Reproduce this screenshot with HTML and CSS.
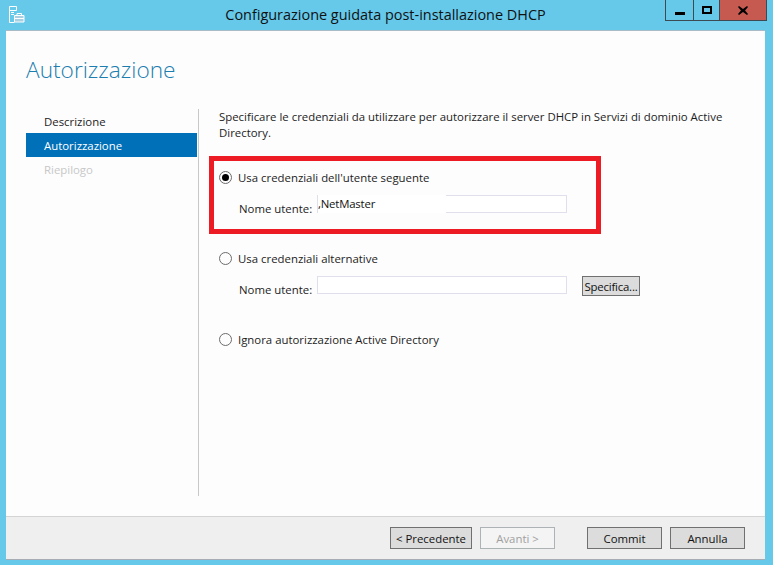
FILE: index.html
```html
<!DOCTYPE html>
<html lang="it">
<head>
<meta charset="utf-8">
<title>Configurazione guidata post-installazione DHCP</title>
<link rel="stylesheet" href="styles.css">
</head>
<body>
<div class="window">
  <header class="titlebar">
    <svg class="app-icon" width="17" height="17" viewBox="0 0 17 17" fill="none" stroke="#fff" stroke-width="1">
      <path d="M1.500 .5h7v4h-7zM1.500 4.500v12h5" />
      <path d="M3 6.500h3M3 8.500h3" />
      <path d="M6.500 9.500h9.500v6.500h-9.500z" fill="#a9cfe2"/>
      <path d="M9 9.500v-2h4.500v2M6.500 12.500h9.500" />
    </svg>
    <div class="title">Configurazione guidata post-installazione DHCP</div>
    <div class="controls">
      <div class="ctl ctl-min"><span class="glyph-min"></span></div>
      <div class="ctl ctl-max"><span class="glyph-max"></span></div>
      <div class="ctl ctl-close">
        <svg width="10" height="9" viewBox="0 0 10 9"><path d="M1 0l4 3 4-3 1 1-3 3.500 3 3.500-1 1-4-3-4 3-1-1 3-3.500-3-3.500z" fill="#000"/></svg>
      </div>
    </div>
  </header>
  <div class="client">
    <main class="main">
      <h1 class="heading">Autorizzazione</h1>
      <div class="columns">
        <nav class="nav">
          <div class="nav-item">Descrizione</div>
          <div class="nav-item active">Autorizzazione</div>
          <div class="nav-item disabled">Riepilogo</div>
        </nav>
        <section class="content">
          <p class="intro">Specificare le credenziali da utilizzare per autorizzare il server DHCP in Servizi di dominio Active Directory.</p>
          <div class="highlight">
            <div class="option"><span class="radio checked"></span><span>Usa credenziali dell'utente seguente</span></div>
            <div class="field">
              <span class="field-label">Nome utente:</span>
              <div class="input redacted"><span class="input-text">,NetMaster</span></div>
            </div>
          </div>
          <div class="plain-group">
            <div class="option"><span class="radio"></span><span>Usa credenziali alternative</span></div>
            <div class="field">
              <span class="field-label">Nome utente:</span>
              <div class="input"></div>
              <div class="btn btn-small">Specifica...</div>
            </div>
            <div class="option option-last"><span class="radio"></span><span>Ignora autorizzazione Active Directory</span></div>
          </div>
        </section>
      </div>
    </main>
    <footer class="footer">
      <div class="btn btn-prev">&lt; Precedente</div>
      <div class="btn btn-next">Avanti &gt;</div>
      <div class="btn btn-commit">Commit</div>
      <div class="btn btn-cancel">Annulla</div>
    </footer>
  </div>
</div>
</body>
</html>
```

FILE: styles.css
```css
* { box-sizing: border-box; }
html, body { margin: 0; padding: 0; }
body {
  width: 773px;
  height: 565px;
  overflow: hidden;
  background: #66c9ea;
  font-family: "Open Sans", "Noto Sans", sans-serif;
  font-size: 11.400px;
  color: #1c1c1c;
}
.window { display: flex; flex-direction: column; width: 773px; height: 565px; padding: 0 8px 5px 6px; }
.titlebar { display: flex; height: 30px; flex: none; position: relative; align-items: flex-start; }
.app-icon { margin: 6px 0 0 2px; flex: none; }
.title { position: absolute; left: 0; right: 0; top: 6px; text-align: center; font-size: 14.450px; line-height: 18px; color: #111; }
.controls { position: absolute; right: -2px; top: 0; display: flex; height: 21px; border: 1px solid #3d4a52; border-top: 0; }
.ctl { display: flex; align-items: center; justify-content: center; height: 20px; }
.ctl-min { width: 28px; border-right: 1px solid #3d4a52; }
.ctl-max { width: 26px; border-right: 1px solid #3d4a52; }
.ctl-close { width: 46px; background: #c75a50; }
.glyph-min { width: 10px; height: 3px; background: #000; margin-top: 6px; }
.glyph-max { width: 10px; height: 8px; border: 2px solid #000; margin-top: -1px; }
.client { flex: 1; display: flex; flex-direction: column; background: #fdfdfd; border-top: 1px solid #a9bcc6; border-bottom: 1px solid #a8adb3; }
.main { flex: 1; padding: 0 0 0 20px; display: flex; flex-direction: column; }
.heading { margin: 23px 0 0; font-size: 22.700px; line-height: 32px; font-weight: 300; color: #1b7eaf; }
.columns { display: flex; margin-top: 23px; height: 387px; }
.nav { width: 171px; margin-right: 1px; }
.nav-item { height: 24px; line-height: 23px; padding: 1px 0 0 18px; }
.nav-item.active { background: #0070b8; color: #fff; }
.nav-item.disabled { color: #c8c8c8; }
.content { flex: 1; border-left: 1px solid #c8c8c8; padding-left: 20px; }
.intro { margin: 0; width: 520px; line-height: 16px; }
.highlight { width: 392px; height: 78px; margin: 15px 0 0 -10px; border: 5px solid #ed1c24; padding: 8px 0 0 5px; }
.option { display: flex; align-items: center; gap: 6px; height: 16px; }
.radio { width: 13px; height: 13px; border: 1px solid #6c6c6c; border-radius: 50%; background: #fdfdfd; display: flex; align-items: center; justify-content: center; flex: none; }
.radio.checked::after { content: ""; width: 7px; height: 7px; border-radius: 50%; background: #000; }
.field { display: flex; align-items: flex-start; margin: 10px 0 0 20px; }
.field-label { width: 78px; flex: none; padding-top: 5px; line-height: 17px; }
.input { width: 250px; height: 18px; border: 1px solid #e0e0ec; background: #fff; position: relative; }
.input-text { position: absolute; left: 0; top: -1px; line-height: 17px; z-index: 1; color: #111; letter-spacing: -.2px; }
.redacted::before { content: ""; position: absolute; left: 0; top: -1px; width: 128px; height: 18px; background: #fff; }
.plain-group { padding-top: 16px; }
.btn { display: flex; align-items: center; justify-content: center; background: #dcdcdc; border: 1px solid #707070; color: #111; flex: none; }
.btn-small { width: 58px; height: 20px; margin-left: 15px; letter-spacing: -.2px; }
.option-last { margin-top: 33px; }
.footer { height: 43px; flex: none; display: flex; background: #efefef; border-top: 1px solid #d4d4d4; padding: 10px 0 0 384px; align-items: flex-start; }
.footer .btn { height: 22px; }
.btn-prev { width: 82px; }
.btn-next { width: 75px; margin-left: 8px; background: #f4f4f4; border-color: #adb2b5; color: #a0a0a0; }
.btn-commit { width: 75px; margin-left: 32px; }
.btn-cancel { width: 75px; margin-left: 8px; }
```
